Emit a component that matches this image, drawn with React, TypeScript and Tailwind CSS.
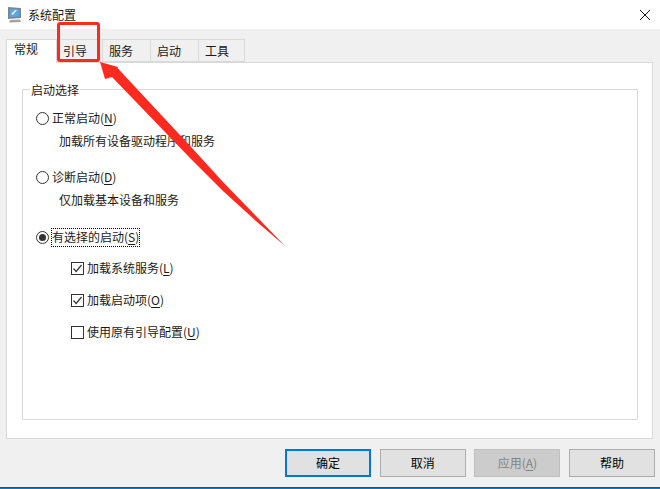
const font = { fontFamily: '"Noto Sans CJK SC", "Liberation Sans", sans-serif' };

function Radio({ checked }: { checked?: boolean }) {
  return (
    <span className="w-[13px] h-[13px] rounded-full border border-[#333333] bg-white flex items-center justify-center shrink-0">
      {checked && <span className="w-[7px] h-[7px] rounded-full bg-[#333333]" />}
    </span>
  );
}

function Check({ checked }: { checked?: boolean }) {
  return (
    <span className="w-[13px] h-[13px] border border-[#333333] bg-white shrink-0 flex items-center justify-center">
      {checked && (
        <svg width="11" height="11" viewBox="0 0 11 11" fill="none">
          <path d="M1.5 5.5 L4.2 8.5 L9.5 2" stroke="#333333" strokeWidth="1.2" />
        </svg>
      )}
    </span>
  );
}

function Mn({ children }: { children: string }) {
  return <span className="underline underline-offset-2">{children}</span>;
}

function RadioRow({ label, k, checked, focus, desc, cls }: { label: string; k: string; checked?: boolean; focus?: boolean; desc?: string; cls: string }) {
  return (
    <div className={cls}>
      <div className="flex items-center h-[20px] gap-[3px]">
        <Radio checked={checked} />
        <span className={focus ? "outline-1 outline-dotted outline-black leading-[16px] h-[17px]" : "leading-[16px] h-[17px]"}>
          {label}(<Mn>{k}</Mn>)
        </span>
      </div>
      {desc && <div className="ml-[23px] mt-[3px] h-[20px] leading-[20px]">{desc}</div>}
    </div>
  );
}

function CheckRow({ label, k, checked, cls }: { label: string; k: string; checked?: boolean; cls: string }) {
  return (
    <div className={"flex items-center h-[20px] gap-[3px] " + cls}>
      <Check checked={checked} />
      <span>
        {label}(<Mn>{k}</Mn>)
      </span>
    </div>
  );
}

function Btn({ label, k, primary, disabled }: { label?: string; k?: string; primary?: boolean; disabled?: boolean }) {
  const cls = primary
    ? "border-2 border-[#0078d7] bg-[#e1e1e1] text-black"
    : disabled
    ? "border border-[#bfbfbf] bg-[#cccccc] text-[#838383]"
    : "border border-[#adadad] bg-[#e1e1e1] text-black";
  return (
    <div className={"w-[86px] h-[28px] flex items-center justify-center text-[12px] " + cls}>
      <span>
        {label}
        {k && (
          <>
            (<Mn>{k}</Mn>)
          </>
        )}
      </span>
    </div>
  );
}

function Tab({ label, cls }: { label: string; cls: string }) {
  return (
    <div className={"h-[23px] flex items-center pl-[6px] border border-[#d9d9d9] border-l-0 bg-[#f0f0f0] " + cls}>
      {label}
    </div>
  );
}

export default function App() {
  return (
    <div className="relative w-[660px] h-[489px] bg-[#f0f0f0] overflow-hidden text-[12px] text-[#1a1a1a] flex flex-col" style={font}>
      <div className="h-[29px] bg-white flex items-center shrink-0">
        <svg className="ml-[7px]" width="16" height="16" viewBox="0 0 16 16">
          <path d="M1 0 L14 1 L14 11 L1 12 Z" fill="#7d8791" />
          <path d="M3 2 L12 2.5 L12 9.5 L3 10 Z" fill="#5aa5e6" />
          <path d="M4 7 L8 3 L10 3 L6 8 Z" fill="#dcecf9" />
          <path d="M3 13 L13 12.5 L14 15 L2 15.5 Z" fill="#a3a3a3" />
        </svg>
        <span className="ml-[5px] text-[#1a1a1a]">系统配置</span>
        <svg className="ml-auto mr-[9px]" width="12" height="12" viewBox="0 0 12 12">
          <path d="M1 1 L11 11 M11 1 L1 11" stroke="#111111" strokeWidth="1" fill="none" />
        </svg>
      </div>

      <div className="flex items-end ml-[6px] mt-[11px] h-[22px] relative z-10">
        <div className="h-[24px] w-[51px] bg-white border border-[#d9d9d9] border-b-0 pl-[7px] leading-[17px] relative top-[1px]">常规</div>
        <Tab label="引导" cls="w-[46px]" />
        <Tab label="服务" cls="w-[48px]" />
        <Tab label="启动" cls="w-[48px]" />
        <Tab label="工具" cls="w-[46px]" />
      </div>

      <div className="ml-[6px] mr-[7px] h-[377px] border border-[#d9d9d9] bg-white pt-[26px] pl-[15px] pr-[14px] shrink-0">
        <div className="relative h-[331px] border border-[#d9d9d9] rounded-[1px]">
          <div className="absolute left-[7px] -top-[9px] bg-white px-[1px] leading-[17px]">启动选择</div>
          <RadioRow cls="ml-[13px] mt-[18px]" label="正常启动" k="N" desc="加载所有设备驱动程序和服务" />
          <RadioRow cls="ml-[13px] mt-[16px]" label="诊断启动" k="D" desc="仅加载基本设备和服务" />
          <RadioRow cls="ml-[13px] mt-[17px]" label="有选择的启动" k="S" checked focus />
          <CheckRow cls="ml-[48px] mt-[11px]" label="加载系统服务" k="L" checked />
          <CheckRow cls="ml-[48px] mt-[12px]" label="加载启动项" k="O" checked />
          <CheckRow cls="ml-[48px] mt-[12px]" label="使用原有引导配置" k="U" />
        </div>
      </div>

      <div className="flex justify-end gap-[8.67px] pr-[5px] mt-[10px]">
        <Btn label="确定" primary />
        <Btn label="取消" />
        <Btn label="应用" k="A" disabled />
        <Btn label="帮助" />
      </div>

      <div className="mt-auto h-[2px] bg-[#0a7ac0] border-t border-[#0b5a8c]" />

      <div className="absolute left-[57px] top-[22px] w-[43px] h-[40px] border-[3px] border-[#ff2a1f] rounded-[3px] z-20" />
      <svg className="absolute left-0 top-0 z-20 pointer-events-none" width="660" height="489" viewBox="0 0 660 489">
        <path d="M100 62 L118 67 L117.5 68 L192 148 L223 182 L257 217 L285 246 L257 222 L223 191 L190 158 L112 77 L105 79 Z" fill="#ff2a1f" />
      </svg>
    </div>
  );
}
